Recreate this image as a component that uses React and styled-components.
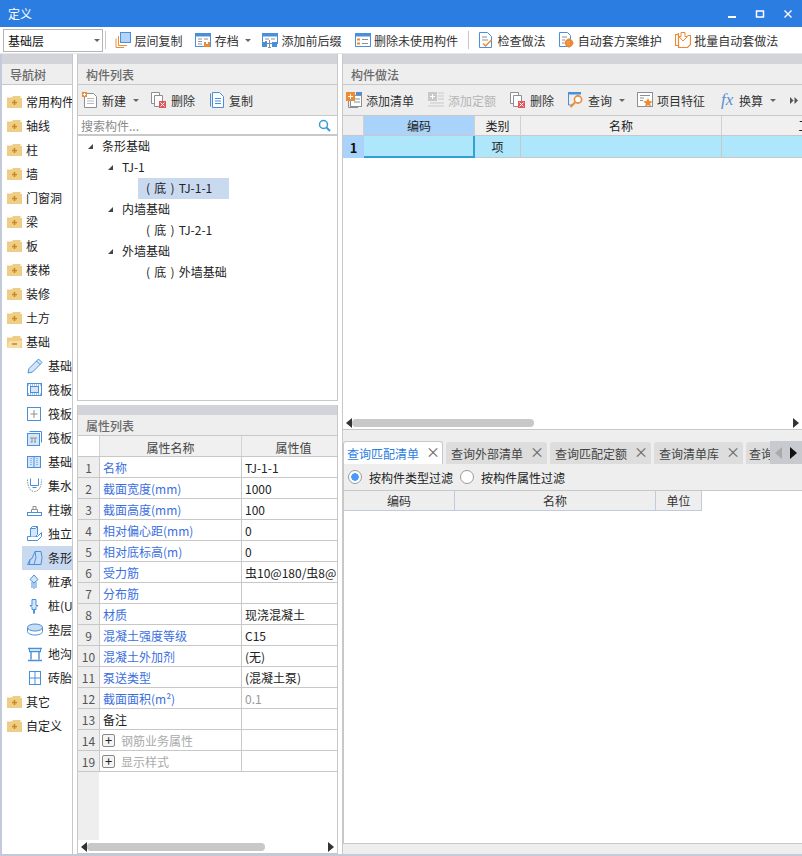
import React from "react";
import styled, { createGlobalStyle } from "styled-components";

const BLUE = "#4a8fdc";
const ORANGE = "#ed8a34";
const GRAY = "#8b9096";
const RED = "#e2555a";

const icons = {
  layerCopy: (
    <>
      <rect x="5.5" y="0.5" width="10" height="10" fill="#b3d3f8" stroke={BLUE} />
      <path d="M3.5 4v9.5H12M1 6.5V15.5H9" fill="none" stroke={ORANGE} />
    </>
  ),
  save: (
    <>
      <rect x="0.5" y="1.5" width="15" height="13" fill="#fff" stroke={BLUE} />
      <rect x="1" y="2" width="14" height="2.5" fill={BLUE} />
      <path d="M3 7h4M3 9.5h4M3 12h4M9 7h4" stroke={GRAY} />
      <rect x="9" y="10" width="6" height="5" fill={ORANGE} />
      <rect x="11" y="10" width="2" height="2" fill="#fff" />
    </>
  ),
  prefix: (
    <>
      <rect x="0.5" y="1.5" width="15" height="10" fill="#fff" stroke={BLUE} />
      <rect x="1" y="2" width="14" height="2.5" fill={BLUE} />
      <path d="M3 7h4M9 7h4M3 9.5h2" stroke={GRAY} />
      <rect x="0" y="10" width="5" height="5" fill={BLUE} />
      <rect x="10" y="10" width="5" height="5" fill={BLUE} />
      <path d="M7.5 8v7.5M6 15.5h3" stroke={GRAY} />
    </>
  ),
  removeUnused: (
    <>
      <rect x="0.5" y="1.5" width="15" height="13" fill="#fff" stroke={BLUE} />
      <rect x="1" y="2" width="14" height="2.5" fill={BLUE} />
      <path d="M7 7.5h6M7 11.5h6" stroke={GRAY} />
      <path d="M2 6.5h3v2H2zM2 10.5h3v2H2z" fill={ORANGE} />
    </>
  ),
  check: (
    <>
      <path d="M1.5 0.5h8l4 4v11h-12z" fill="#fff" stroke={BLUE} />
      <path d="M4 5h5M4 8h6" stroke={GRAY} />
      <path d="M5 11.5l2.5 2.5 6-6" fill="none" stroke={ORANGE} strokeWidth="1.5" />
    </>
  ),
  schemeGear: (
    <>
      <path d="M1.5 0.5h8l3 3v11h-11z" fill="#fff" stroke={BLUE} />
      <path d="M4 5h5M4 8h3M4 11h2" stroke={GRAY} />
      <circle cx="11" cy="11" r="3" fill="none" stroke={ORANGE} strokeWidth="2.4" />
      <path d="M11 6.5v9M6.5 11h9" stroke={ORANGE} strokeWidth="1.4" />
    </>
  ),
  batch: (
    <>
      <path d="M3.5 2.5h-3v11h3M3.5 1v14.5h9l3-3V3.5h-3" fill="none" stroke={ORANGE} strokeWidth="1.2" />
      <path d="M6 0.5h4v4h2.5L8 9 3.8 4.5H6z" fill="#fff" stroke={ORANGE} />
    </>
  ),
  newDoc: (
    <>
      <path d="M2.5 1.5h9l3 3v11h-12z" fill="#fff" stroke={GRAY} />
      <path d="M5 6.5h7M5 9h7M5 11.5h7" stroke="#b8b8b8" />
      <rect x="0" y="0" width="5" height="5" fill={ORANGE} />
      <path d="M2.5 1v3M1 2.5h3" stroke="#fff" />
    </>
  ),
  del: (
    <>
      <path d="M0.5 0.5h8v11h-8z" fill="#fff" stroke={GRAY} />
      <path d="M3.5 3.5h8v11h-8z" fill="#fff" stroke={GRAY} />
      <rect x="8" y="9" width="7" height="7" fill={RED} />
      <path d="M9.5 10.5l4 4M13.5 10.5l-4 4" stroke="#fff" />
    </>
  ),
  copy: (
    <>
      <path d="M1.5 1.5v13" stroke={BLUE} />
      <path d="M3.5 0.5h7l4 4v11h-11z" fill="#fff" stroke={BLUE} />
      <path d="M6 6.5h6M6 9h6M6 11.5h6" stroke={BLUE} />
    </>
  ),
  addList: (
    <>
      <rect x="4.5" y="3.5" width="11" height="11" fill="#fff" stroke={GRAY} />
      <path d="M2.5 9v6.5H12M8 7h6M8 10h6" fill="none" stroke={GRAY} />
      <rect x="10" y="0" width="6" height="3" fill={BLUE} />
      <rect x="0" y="0" width="9" height="9" fill={ORANGE} />
      <path d="M4.5 2v5M2 4.5h5" stroke="#fff" />
    </>
  ),
  addQuota: (
    <>
      <rect x="0" y="0" width="9" height="9" fill="#c8c8c8" />
      <path d="M4.5 2v5M2 4.5h5" stroke="#fff" />
      <path d="M10 1h6M10 4h6M10 7h6M2 11h14M0 14h16" stroke="#c8c8c8" strokeWidth="1.2" />
    </>
  ),
  query: (
    <>
      <path d="M0.5 2v11h4" fill="none" stroke={BLUE} />
      <rect x="0" y="0" width="13" height="2.5" fill={BLUE} />
      <circle cx="10" cy="7.5" r="3.6" fill="#fff" stroke={ORANGE} strokeWidth="1.6" />
      <path d="M7 10.5l-4.5 4.5" stroke={ORANGE} strokeWidth="2" />
    </>
  ),
  feature: (
    <>
      <rect x="0.5" y="0.5" width="15" height="14" fill="#fff" stroke={GRAY} />
      <path d="M3 3.5h10M3 6h4M3 8.5h3" stroke={GRAY} />
      <path d="M11 6l1.4 3.1 3.4.3-2.6 2.2.8 3.3-3-1.8-3 1.8.8-3.3-2.6-2.2 3.4-.3z" fill={ORANGE} />
    </>
  ),
  pencil: (
    <>
      <path d="M1 15l1-4.5L11.5 1 15 4.5 5.5 14z" fill="#d5e6fa" stroke={BLUE} />
      <path d="M9.5 3l3.5 3.5" stroke={BLUE} />
    </>
  ),
  raft: (
    <>
      <rect x="0.5" y="1.5" width="14" height="12" fill="#fff" stroke={BLUE} />
      <rect x="3.5" y="4.5" width="8" height="6" fill="#d5e6fa" stroke={BLUE} />
      <path d="M1 3h13M1 12h13" stroke={BLUE} strokeDasharray="1 1" />
    </>
  ),
  raftCross: (
    <>
      <rect x="0.5" y="1.5" width="13" height="13" fill="#fff" stroke={BLUE} />
      <path d="M7 4v8M3.5 8h7" stroke={GRAY} />
    </>
  ),
  raftStack: (
    <>
      <path d="M2.5 1.5h12v11" fill="none" stroke={BLUE} />
      <rect x="0.5" y="3.5" width="12" height="12" fill="#d5e6fa" stroke={BLUE} />
      <path d="M3 8h7M5 8v4M8 8v4M3.5 12h2M7 12h2" fill="none" stroke={GRAY} />
    </>
  ),
  beamBase: (
    <>
      <rect x="0.5" y="2.5" width="13" height="11" fill="#d5e6fa" stroke={BLUE} />
      <path d="M7 3v10" stroke={BLUE} />
      <path d="M4 4v8M10 4v8" stroke={BLUE} strokeDasharray="1 1" />
    </>
  ),
  sump: (
    <>
      <path d="M0.5 1.5c0 8 3 12 7 12s7-4 7-12" fill="none" stroke={GRAY} strokeDasharray="1.5 1" />
      <path d="M3.5 0.5v7h8v-7" fill="#fff" stroke={BLUE} />
      <path d="M5.5 9.5h4" stroke={BLUE} />
    </>
  ),
  pier: (
    <>
      <rect x="0.5" y="10.5" width="14" height="3" fill="#fff" stroke={BLUE} />
      <path d="M4.5 10.5v-3h6v3M6 7.5v-3h3v3" fill="none" stroke={GRAY} />
    </>
  ),
  isolated: (
    <>
      <path d="M0.5 10.5h10l4-4v4l-4 4h-10z" fill="#fff" stroke={BLUE} />
      <path d="M3.5 10.5v-8h5l2-2v8l-2 2" fill="#d5e6fa" stroke={BLUE} />
      <path d="M3.5 2.5l2-2h5" fill="none" stroke={BLUE} />
    </>
  ),
  strip: (
    <>
      <path d="M0.5 14.5l2.5-5 2-1 3-7h6l1 6-1 7z" fill="#c9dcf3" stroke={BLUE} />
      <path d="M8 1.5l1 6-2 7M3 9.5l-.5 5" fill="none" stroke={BLUE} />
    </>
  ),
  cap: (
    <>
      <path d="M7 1l4 4.5-4 3.5-4-3.5z" fill="#d5e6fa" stroke={BLUE} />
      <path d="M5 8v6M7 9v6M9 8v6" stroke={BLUE} />
    </>
  ),
  pile: (
    <>
      <path d="M5 1.5h4v6h2l-2 2v2H5v-2l-2-2h2z" fill="#d5e6fa" stroke={BLUE} />
      <path d="M7 11.5v4" stroke={BLUE} strokeWidth="2" />
    </>
  ),
  cushion: (
    <>
      <ellipse cx="8" cy="5.5" rx="7.5" ry="3.5" fill="#c9dcf3" stroke={BLUE} />
      <path d="M0.5 5.5v4c0 2 3.5 3.5 7.5 3.5s7.5-1.5 7.5-3.5v-4" fill="none" stroke={BLUE} />
    </>
  ),
  trench: (
    <>
      <path d="M1 2.5h14M2 5.5h12" stroke={BLUE} strokeWidth="1.4" />
      <path d="M4 5.5v8M12 5.5v8M1 14.5h14" stroke={BLUE} strokeWidth="1.4" />
      <path d="M2.5 2.5v3M13.5 2.5v3" stroke={BLUE} />
    </>
  ),
  brick: (
    <>
      <rect x="2.5" y="1.5" width="11" height="13" fill="#fff" stroke={BLUE} />
      <path d="M8 2v12M3 8h10" stroke={BLUE} />
    </>
  ),
};

const treeItems = [
  { label: "常用构件" },
  { label: "轴线" },
  { label: "柱" },
  { label: "墙" },
  { label: "门窗洞" },
  { label: "梁" },
  { label: "板" },
  { label: "楼梯" },
  { label: "装修" },
  { label: "土方" },
  { label: "基础", open: true },
  { label: "基础", icon: "pencil" },
  { label: "筏板", icon: "raft" },
  { label: "筏板", icon: "raftCross" },
  { label: "筏板", icon: "raftStack" },
  { label: "基础", icon: "beamBase" },
  { label: "集水", icon: "sump" },
  { label: "柱墩", icon: "pier" },
  { label: "独立", icon: "isolated" },
  { label: "条形", icon: "strip", active: true },
  { label: "桩承", icon: "cap" },
  { label: "桩(U", icon: "pile" },
  { label: "垫层", icon: "cushion" },
  { label: "地沟", icon: "trench" },
  { label: "砖胎", icon: "brick" },
  { label: "其它" },
  { label: "自定义" },
];

const components = [
  { label: "条形基础", level: 0, arrow: true },
  { label: "TJ-1", level: 1, arrow: true },
  { label: "( 底 ) TJ-1-1", level: 2, selected: true },
  { label: "内墙基础", level: 1, arrow: true },
  { label: "( 底 ) TJ-2-1", level: 2 },
  { label: "外墙基础", level: 1, arrow: true },
  { label: "( 底 ) 外墙基础", level: 2 },
];

const properties = [
  { no: 1, name: "名称", value: "TJ-1-1", link: true },
  { no: 2, name: "截面宽度(mm)", value: "1000", link: true },
  { no: 3, name: "截面高度(mm)", value: "100", link: true },
  { no: 4, name: "相对偏心距(mm)", value: "0", link: true },
  { no: 5, name: "相对底标高(m)", value: "0", link: true },
  { no: 6, name: "受力筋", value: "虫10@180/虫8@", link: true },
  { no: 7, name: "分布筋", value: "", link: true },
  { no: 8, name: "材质", value: "现浇混凝土", link: true },
  { no: 9, name: "混凝土强度等级", value: "C15", link: true },
  { no: 10, name: "混凝土外加剂", value: "(无)", link: true },
  { no: 11, name: "泵送类型", value: "(混凝土泵)", link: true },
  { no: 12, name: "截面面积(m²)", value: "0.1", link: true, muted: true },
  { no: 13, name: "备注", value: "" },
  { no: 14, name: "钢筋业务属性", value: "", group: true },
  { no: 19, name: "显示样式", value: "", group: true },
];

const tabs = ["查询匹配清单", "查询外部清单", "查询匹配定额", "查询清单库", "查询"];

export default function App() {
  return (
    <Page>
      <GlobalStyle />
      <TitleBar>
        <span>定义</span>
        <WindowButtons>
          <svg width="10" height="10" viewBox="0 0 10 10">
            <path d="M1 8h8" stroke="#fff" strokeWidth="2" />
          </svg>
          <svg width="10" height="10" viewBox="0 0 10 10">
            <rect x="1.5" y="2" width="7" height="6" fill="none" stroke="#fff" strokeWidth="1.5" />
          </svg>
          <svg width="10" height="10" viewBox="0 0 10 10">
            <path d="M1.5 1.5l7 7M8.5 1.5l-7 7" stroke="#fff" strokeWidth="1.4" />
          </svg>
        </WindowButtons>
      </TitleBar>

      <MainToolbar>
        <LayerSelect>
          基础层
          <Caret />
        </LayerSelect>
        <ToolSeparator />
        <ToolButton><Icon name="layerCopy" />层间复制</ToolButton>
        <ToolButton><Icon name="save" />存档<Caret /></ToolButton>
        <ToolButton><Icon name="prefix" />添加前后缀</ToolButton>
        <ToolButton><Icon name="removeUnused" />删除未使用构件</ToolButton>
        <ToolSeparator />
        <ToolButton><Icon name="check" />检查做法</ToolButton>
        <ToolButton><Icon name="schemeGear" />自动套方案维护</ToolButton>
        <ToolButton><Icon name="batch" />批量自动套做法</ToolButton>
      </MainToolbar>

      <Workspace>
        <Sidebar>
          <PanelStrip />
          <PanelTitle>导航树</PanelTitle>
          <NavList>
            {treeItems.map((item, i) => (
              <NavRow key={i} $child={!!item.icon} $active={item.active}>
                {item.icon ? <Icon name={item.icon} /> : <Folder open={item.open} />}
                <NavLabel>{item.label}</NavLabel>
              </NavRow>
            ))}
          </NavList>
        </Sidebar>

        <CenterColumn>
          <Panel $height={347}>
            <PanelStrip />
            <PanelTitle>构件列表</PanelTitle>
            <PanelBar $gap={8} $inset={1}>
              <PanelButton><Icon name="newDoc" />新建<Caret /></PanelButton>
              <PanelButton><Icon name="del" />删除</PanelButton>
              <PanelButton><Icon name="copy" />复制</PanelButton>
            </PanelBar>
            <SearchBox>
              <SearchText>搜索构件...</SearchText>
              <svg width="13" height="13" viewBox="0 0 13 13">
                <circle cx="5.5" cy="5.5" r="4" fill="none" stroke="#3b9ad6" strokeWidth="1.5" />
                <path d="M8.5 8.5l3.5 3.5" stroke="#3b9ad6" strokeWidth="2" />
              </svg>
            </SearchBox>
            <ComponentTree>
              {components.map((node) => (
                <TreeRow key={node.label} $level={node.level} $selected={node.selected}>
                  {node.arrow && <TreeArrow />}
                  {node.label}
                </TreeRow>
              ))}
            </ComponentTree>
          </Panel>

          <Panel>
            <PanelStrip />
            <PanelTitle>属性列表</PanelTitle>
            <PropHead>
              <CornerCell />
              <PropHeadCell>属性名称</PropHeadCell>
              <PropHeadCell>属性值</PropHeadCell>
            </PropHead>
            {properties.map((prop) => (
              <PropRow key={prop.no}>
                <RowNumber>{prop.no}</RowNumber>
                <PropName $link={prop.link} $group={prop.group}>
                  {prop.group && <ExpandBox>+</ExpandBox>}
                  {prop.name}
                </PropName>
                <PropValue $muted={prop.muted}>{prop.value}</PropValue>
              </PropRow>
            ))}
            <GutterFill />
            <ScrollBar $thumb={178} $start={0} />
          </Panel>
        </CenterColumn>

        <RightColumn>
          <MethodPanel>
            <PanelStrip />
            <PanelTitle>构件做法</PanelTitle>
            <PanelBar $gap={8} $inset={0}>
              <PanelButton><Icon name="addList" />添加清单</PanelButton>
              <PanelButton $disabled><Icon name="addQuota" />添加定额</PanelButton>
              <PanelButton><Icon name="del" />删除</PanelButton>
              <PanelButton><Icon name="query" />查询<Caret /></PanelButton>
              <PanelButton><Icon name="feature" />项目特征</PanelButton>
              <PanelButton>
                <FxMark>fx</FxMark>换算<Caret />
              </PanelButton>
              <MoreMark width="8" height="7" viewBox="0 0 8 7">
                <path d="M0 0l3.5 3.5L0 7zM4.5 0L8 3.5 4.5 7z" fill="#555" />
              </MoreMark>
            </PanelBar>
            <MethodGrid>
              <GridHead $selected />
              <GridHead $selected $hot>编码</GridHead>
              <GridHead>类别</GridHead>
              <GridHead>名称</GridHead>
              <GridHead>工程量</GridHead>
              <RowMark>1</RowMark>
              <GridCell $focus />
              <GridCell>项</GridCell>
              <GridCell />
              <GridCell />
            </MethodGrid>
            <GridSpace />
            <ScrollBar $thumb={182} $start={0} />
          </MethodPanel>

          <QueryPanel>
            <TabStrip>
              {tabs.map((tab, i) => (
                <Tab key={tab} $active={i === 0} $last={i === tabs.length - 1}>
                  {tab}
                  {i < tabs.length - 1 && <TabClose>×</TabClose>}
                </Tab>
              ))}
              <TabScroll>
                <svg width="8" height="12" viewBox="0 0 8 12"><path d="M7 0v12L0 6z" fill="#aaa" /></svg>
                <svg width="8" height="12" viewBox="0 0 8 12"><path d="M1 0v12l7-6z" fill="#111" /></svg>
              </TabScroll>
            </TabStrip>
            <FilterRow>
              <RadioLabel><Radio $checked />按构件类型过滤</RadioLabel>
              <RadioLabel><Radio />按构件属性过滤</RadioLabel>
            </FilterRow>
            <QueryHead>
              <QueryHeadCell $width={111}>编码</QueryHeadCell>
              <QueryHeadCell $width={201}>名称</QueryHeadCell>
              <QueryHeadCell $width={46}>单位</QueryHeadCell>
            </QueryHead>
            <QueryBody />
            <QueryFoot />
          </QueryPanel>
        </RightColumn>
      </Workspace>
    </Page>
  );
}

function Icon({ name }) {
  return <IconSvg viewBox="0 0 16 16">{icons[name]}</IconSvg>;
}

function Folder({ open }) {
  return (
    <FolderSvg viewBox="0 0 15 13">
      <path d="M0 2.5h5L6 1h7.5v2H15v10H0z" fill="#f0cd85" />
      {open && <path d="M0 13l2-7h13l-2 7z" fill="#f7dca3" />}
      <path d={open ? "M5 9h5" : "M7.5 5v5M5 7.5h5"} stroke="#c98a2c" strokeWidth="1.6" />
    </FolderSvg>
  );
}

function ScrollBar({ $thumb, $start }) {
  return (
    <ScrollTrack>
      <svg width="6" height="10" viewBox="0 0 6 10"><path d="M6 0v10L0 5z" fill="#333" /></svg>
      <ScrollThumb $width={$thumb} $start={$start} />
      <svg width="6" height="10" viewBox="0 0 6 10"><path d="M0 0v10l6-5z" fill="#333" /></svg>
    </ScrollTrack>
  );
}

const GlobalStyle = createGlobalStyle`
  html, body {
    margin: 0;
    padding: 0;
    background: #fff;
  }
  body {
    font-family: "Noto Sans CJK SC", "Liberation Sans", sans-serif;
    font-size: 12px;
    color: #222;
  }
`;

const Page = styled.div`
  width: 802px;
  height: 856px;
  display: flex;
  flex-direction: column;
  overflow: hidden;
`;

const TitleBar = styled.div`
  height: 27px;
  flex: none;
  background: #2b7de1;
  color: #fff;
  display: flex;
  align-items: center;
  justify-content: space-between;
  padding: 0 9px 0 8px;
`;

const WindowButtons = styled.div`
  display: flex;
  gap: 18px;
`;

const MainToolbar = styled.div`
  height: 26px;
  flex: none;
  display: flex;
  align-items: center;
  gap: 1px;
  padding-left: 3px;
  background: #fff;
  border-bottom: 1px solid #e6e6e6;
`;

const LayerSelect = styled.div`
  width: 100px;
  height: 23px;
  box-sizing: border-box;
  border: 1px solid #b4b4b4;
  margin-right: -2px;
  padding: 0 4px;
  display: flex;
  align-items: center;
  justify-content: space-between;
  color: #111;
`;

const Caret = styled.i`
  width: 0;
  height: 0;
  flex: none;
  margin-right: -2px;
  border-left: 3px solid transparent;
  border-right: 3px solid transparent;
  border-top: 3px solid #666;
`;

const ToolSeparator = styled.div`
  width: 1px;
  height: 18px;
  margin: 0 2px 0 3px;
  background: #c8c8c8;
`;

const ToolButton = styled.div`
  height: 24px;
  display: flex;
  align-items: center;
  gap: 3.4px;
  padding: 0 6px;
  white-space: nowrap;
  color: ${({ $disabled }) => ($disabled ? "#b5b5b5" : "#333")};

  & > i {
    margin-left: 3px;
  }
`;

const PanelButton = styled(ToolButton)`
  gap: 4px;
  padding: 0 3px;
`;

const IconSvg = styled.svg`
  width: 16px;
  height: 16px;
  flex: none;
`;

const FolderSvg = styled.svg`
  width: 15px;
  height: 13px;
  flex: none;
`;

const Workspace = styled.div`
  flex: 1;
  min-height: 0;
  display: flex;
  background: #fff;
  border-left: 2px solid #c2cbdb;
  border-bottom: 2px solid #c2cbdb;
`;

const Sidebar = styled.div`
  width: 70px;
  flex: none;
  display: flex;
  flex-direction: column;
  border-right: 1px solid #c8c8c8;
  overflow: hidden;
`;

const PanelStrip = styled.div`
  height: 10px;
  flex: none;
  background: #d3d4d9;
`;

const PanelTitle = styled.div`
  height: 20px;
  flex: none;
  display: flex;
  align-items: center;
  padding-left: 8px;
  background: #eee;
  color: #6a6a6a;
  font-weight: 500;
  border-bottom: 1px solid #c8c8c8;
`;

const NavList = styled.div`
  padding-top: 5px;
`;

const NavRow = styled.div`
  height: 24px;
  box-sizing: border-box;
  display: flex;
  align-items: center;
  gap: ${({ $child }) => ($child ? "5px" : "4px")};
  margin-left: ${({ $child }) => ($child ? "20px" : "0")};
  padding: 0 0 1px 5px;
  background: ${({ $active }) => ($active ? "#c8d9f0" : "transparent")};
  color: #222;
`;

const NavLabel = styled.span`
  flex: 1;
  min-width: 0;
  overflow: hidden;
  white-space: nowrap;
`;

const CenterColumn = styled.div`
  width: 261px;
  flex: none;
  margin-left: 4px;
  display: flex;
  flex-direction: column;
  gap: 4px;
`;

const Panel = styled.div`
  ${({ $height }) => ($height ? `height: ${$height}px; flex: none;` : "flex: 1; min-height: 0;")}
  box-sizing: border-box;
  display: flex;
  flex-direction: column;
  border-left: 1px solid #c8c8c8;
  border-right: 1px solid #c8c8c8;
  border-bottom: 1px solid #c8c8c8;
  overflow: hidden;
`;

const PanelBar = styled.div`
  height: 30px;
  flex: none;
  display: flex;
  align-items: center;
  gap: ${({ $gap }) => $gap}px;
  padding-left: ${({ $inset }) => $inset}px;
  background: #eee;
  border-bottom: 1px solid #c8c8c8;
`;

const SearchBox = styled.div`
  height: 18px;
  flex: none;
  display: flex;
  align-items: center;
  justify-content: space-between;
  padding: 0 6px 0 3px;
  background: #fff;
  border-bottom: 2px solid #c8c8c8;
`;

const SearchText = styled.span`
  color: #8a8a8a;
`;

const ComponentTree = styled.div`
  flex: 1;
  min-height: 0;
`;

const TreeRow = styled.div`
  height: 21px;
  display: flex;
  align-items: center;
  box-sizing: content-box;
  height: 19px;
  padding-bottom: 2px;
  white-space: pre;
  word-spacing: 1.5px;
  color: #222;
  position: relative;
  margin-left: ${({ $level }) => [24, 44, 60][$level]}px;
  padding-left: ${({ $level }) => ($level === 2 ? "8px" : "0")};
  width: ${({ $level }) => ($level === 2 ? "83px" : "auto")};
  background: ${({ $selected }) => ($selected ? "#c8d9f0" : "transparent")};
`;

const TreeArrow = styled.i`
  position: absolute;
  left: -14px;
  top: 8px;
  width: 0;
  height: 0;
  border-left: 5px solid transparent;
  border-bottom: 5px solid #444;
`;

const PropHead = styled.div`
  height: 21px;
  flex: none;
  display: grid;
  grid-template-columns: 21px 142px 104px;
  border-bottom: 1px solid #c8c8c8;
  box-sizing: border-box;
`;

const CornerCell = styled.div`
  background: #fff;
`;

const PropHeadCell = styled.div`
  display: flex;
  align-items: center;
  justify-content: center;
  padding-top: 2px;
  box-sizing: border-box;
  background: #f0f0f0;
  color: #444;
  border-left: 1px solid #d4d4d4;
`;

const PropRow = styled.div`
  height: 21px;
  flex: none;
  box-sizing: border-box;
  display: grid;
  grid-template-columns: 21px 142px 104px;
  border-bottom: 1px solid #c8c8c8;
`;

const RowNumber = styled.div`
  background: #eee;
  color: #555;
  display: flex;
  align-items: center;
  justify-content: center;
`;

const PropName = styled.div`
  display: flex;
  align-items: center;
  gap: 6px;
  padding-left: ${({ $group }) => ($group ? "2px" : "3px")};
  border-left: 1px solid #c8c8c8;
  color: ${({ $link, $group }) => ($group ? "#aaa" : $link ? "#3a6fe0" : "#222")};
  white-space: nowrap;
`;

const PropValue = styled.div`
  display: flex;
  align-items: center;
  padding-left: 3px;
  border-left: 1px solid #c8c8c8;
  white-space: nowrap;
  overflow: hidden;
  color: ${({ $muted }) => ($muted ? "#999" : "#222")};
`;

const ExpandBox = styled.span`
  width: 13px;
  height: 13px;
  box-sizing: border-box;
  flex: none;
  border: 1px solid #888;
  border-radius: 2px;
  background: #f4f4f4;
  color: #222;
  line-height: 10px;
  text-align: center;
  font-size: 13px;
`;

const GutterFill = styled.div`
  flex: 1;
  width: 21px;
  background: #eee;
`;

const ScrollTrack = styled.div`
  height: 13px;
  flex: none;
  display: flex;
  align-items: center;
  padding: 0 3px;
  background: #fff;

  & > svg:last-child {
    margin-left: auto;
  }
`;

const ScrollThumb = styled.div`
  height: 8px;
  width: ${({ $width }) => $width}px;
  margin-left: ${({ $start }) => $start}px;
  border-radius: 4px;
  background: #c8c8c8;
`;

const RightColumn = styled.div`
  flex: 1;
  min-width: 0;
  margin-left: 4px;
  display: flex;
  flex-direction: column;
  border-left: 1px solid #c8c8c8;
`;

const MethodPanel = styled.div`
  height: 376px;
  flex: none;
  box-sizing: border-box;
  display: flex;
  flex-direction: column;
  overflow: hidden;
  border-bottom: 1px solid #c8c8c8;
`;

const MoreMark = styled.svg`
  margin-left: auto;
  margin-right: 4px;
  flex: none;
`;

const FxMark = styled.span`
  width: 16px;
  flex: none;
  text-align: center;
  font-family: "Liberation Serif", serif;
  font-style: italic;
  font-size: 17px;
  line-height: 16px;
  color: #5b8fd0;
`;

const MethodGrid = styled.div`
  display: grid;
  grid-template-columns: 21px 111px 46px 201px 190px;
  grid-auto-rows: 20px 22px;
  flex: none;
`;

const GridHead = styled.div`
  display: flex;
  align-items: center;
  justify-content: center;
  box-sizing: border-box;
  color: #222;
  border-right: 1px solid #d0d0d0;
  border-bottom: 1px solid #c8c8c8;
  background: ${({ $selected, $hot }) => ($hot ? "#aad3fb" : $selected ? "#eee" : "#f0f0f0")};
`;

const RowMark = styled.div`
  display: flex;
  align-items: center;
  justify-content: center;
  background: #aad3fb;
  font-weight: 700;
  font-size: 13px;
  color: #111;
`;

const GridCell = styled.div`
  display: flex;
  align-items: center;
  justify-content: center;
  box-sizing: border-box;
  background: #aee6fb;
  color: #222;
  border-right: ${({ $focus }) => ($focus ? "2px solid #2fa3d0" : "1px solid #c8c8c8")};
  border-bottom: ${({ $focus }) => ($focus ? "2px solid #2fa3d0" : "1px solid #c8c8c8")};
`;

const GridSpace = styled.div`
  flex: 1;
  min-height: 0;
  background: #fff;
`;

const QueryPanel = styled.div`
  flex: 1;
  min-height: 0;
  display: flex;
  flex-direction: column;
  background: #eee;
`;

const TabStrip = styled.div`
  height: 23px;
  margin-top: 11px;
  flex: none;
  display: flex;
  align-items: flex-end;
  gap: 3px;
  position: relative;
  overflow: hidden;
`;

const Tab = styled.div`
  height: ${({ $active }) => ($active ? "23px" : "22px")};
  flex: none;
  box-sizing: border-box;
  display: flex;
  align-items: center;
  gap: 7px;
  padding: ${({ $active, $last }) => ($active ? "0 6px 0 3px" : $last ? "0 7px 0 3px" : "0 7px 0 5px")};
  border-radius: 3px 3px 0 0;
  white-space: nowrap;
  background: ${({ $active }) => ($active ? "#fff" : "#ddd")};
  color: ${({ $active }) => ($active ? "#2b7de1" : "#444")};
  border: ${({ $active }) => ($active ? "1px solid #c8c8c8" : "none")};
  border-bottom: none;
`;

const TabClose = styled.span`
  width: 10px;
  flex: none;
  text-align: center;
  font-size: 14px;
  line-height: 12px;
  color: #666;
  margin-top: -4px;
`;

const TabScroll = styled.div`
  position: absolute;
  right: 0;
  top: 0;
  bottom: 0;
  width: 32px;
  display: flex;
  align-items: center;
  justify-content: space-evenly;
  background: #c9cacf;
`;

const FilterRow = styled.div`
  height: 27px;
  flex: none;
  box-sizing: border-box;
  display: flex;
  align-items: center;
  gap: 7px;
  padding-left: 4px;
  background: #eee;
  border-left: 1px solid #c8c8c8;
  border-bottom: 1px solid #c8c8c8;
`;

const RadioLabel = styled.label`
  display: flex;
  align-items: center;
  gap: 7px;
  color: #222;
`;

const Radio = styled.span`
  width: 14px;
  height: 14px;
  box-sizing: border-box;
  border: 1px solid #9a9a9a;
  border-radius: 50%;
  background: ${({ $checked }) =>
    $checked ? "radial-gradient(circle, #4a9bf5 0 3.5px, #fff 4px)" : "#fff"};
`;

const QueryHead = styled.div`
  height: 20px;
  flex: none;
  display: flex;
  background: #fff;
  border-left: 1px solid #c8c8c8;
`;

const QueryHeadCell = styled.div`
  width: ${({ $width }) => $width}px;
  box-sizing: border-box;
  display: flex;
  align-items: center;
  justify-content: center;
  background: #eee;
  color: #333;
  border-right: 1px solid #c2cbdb;
  border-bottom: 1px solid #c2cbdb;
`;

const QueryBody = styled.div`
  flex: 1;
  min-height: 0;
  background: #fff;
  border-left: 1px solid #c8c8c8;
  border-bottom: 1px solid #c8c8c8;
`;

const QueryFoot = styled.div`
  height: 10px;
  flex: none;
  background: #eee;
`;
